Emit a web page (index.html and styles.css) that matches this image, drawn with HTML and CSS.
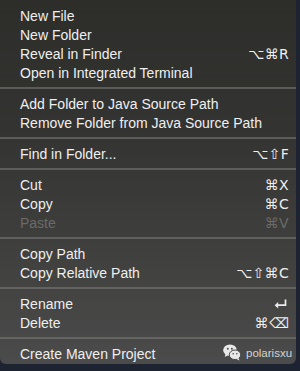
FILE: index.html
```html
<!DOCTYPE html>
<html>
<head>
<meta charset="utf-8">
<link rel="stylesheet" href="styles.css">
</head>
<body>
<div class="menu">
  <div class="group">
    <div class="item"><span class="label">New File</span></div>
    <div class="item"><span class="label">New Folder</span></div>
    <div class="item"><span class="label">Reveal in Finder</span><span class="key">⌥⌘R</span></div>
    <div class="item"><span class="label">Open in Integrated Terminal</span></div>
  </div>
  <div class="sep"></div>
  <div class="group">
    <div class="item"><span class="label">Add Folder to Java Source Path</span></div>
    <div class="item"><span class="label">Remove Folder from Java Source Path</span></div>
  </div>
  <div class="sep"></div>
  <div class="group">
    <div class="item"><span class="label">Find in Folder...</span><span class="key">⌥⇧F</span></div>
  </div>
  <div class="sep"></div>
  <div class="group">
    <div class="item"><span class="label">Cut</span><span class="key">⌘X</span></div>
    <div class="item"><span class="label">Copy</span><span class="key">⌘C</span></div>
    <div class="item disabled"><span class="label">Paste</span><span class="key">⌘V</span></div>
  </div>
  <div class="sep"></div>
  <div class="group">
    <div class="item"><span class="label">Copy Path</span></div>
    <div class="item"><span class="label">Copy Relative Path</span><span class="key">⌥⇧⌘C</span></div>
  </div>
  <div class="sep"></div>
  <div class="group">
    <div class="item"><span class="label">Rename</span><span class="key"><svg class="ret" width="13" height="10" viewBox="0 0 13 10"><path d="M11.5 0.5 V6.2 H2.5" fill="none" stroke="#ececec" stroke-width="1.7"/><path d="M0.6 6.2 L4.2 3 V9.4 Z" fill="#ececec"/></svg></span></div>
    <div class="item"><span class="label">Delete</span><span class="key">⌘⌫</span></div>
  </div>
  <div class="sep"></div>
  <div class="group">
    <div class="item"><span class="label">Create Maven Project</span></div>
  </div>
</div>
<div class="watermark">
  <svg width="18" height="17" viewBox="0 0 18 17">
    <ellipse cx="7" cy="6.2" rx="6.8" ry="5.8" fill="#e8e8e8"/>
    <path d="M2.5 9.8 L1.8 13 L5.2 11 Z" fill="#e8e8e8"/>
    <ellipse cx="12" cy="10.8" rx="5.7" ry="4.8" fill="#e8e8e8" stroke="#4a4a4a" stroke-width="1"/>
    <path d="M15.3 13.8 L16.6 16.6 L13.4 15 Z" fill="#e8e8e8"/>
    <circle cx="4.8" cy="4.7" r="0.95" fill="#4a4a4a"/>
    <circle cx="8.9" cy="4.7" r="0.95" fill="#4a4a4a"/>
    <circle cx="10.2" cy="9.8" r="0.8" fill="#4a4a4a"/>
    <circle cx="13.8" cy="9.8" r="0.8" fill="#4a4a4a"/>
  </svg>
  <span>polarisxu</span>
</div>
</body>
</html>
```
FILE: styles.css
```css
html, body {
  margin: 0;
  padding: 0;
}
body {
  width: 300px;
  height: 371px;
  background: #1d2330;
  position: relative;
  overflow: hidden;
  font-family: "Liberation Sans", Arial, "DejaVu Sans", sans-serif;
}
.menu {
  width: 296px;
  height: 364px;
  box-sizing: border-box;
  padding-top: 6px;
  background: linear-gradient(to bottom, #2d2d2a 0%, #333331 35%, #3e3e3c 65%, #4b4b4b 100%);
  border-bottom-left-radius: 6px;
  border-bottom-right-radius: 6px;
  display: flex;
  flex-direction: column;
}
.group {
  display: flex;
  flex-direction: column;
}
.item {
  height: 19px;
  display: flex;
  align-items: center;
  justify-content: space-between;
  padding: 0 7px 0 20px;
  color: #efefef;
  font-size: 14px;
}
.item.disabled {
  color: #6b6b69;
}
.key {
  font-family: "DejaVu Sans", sans-serif;
  font-size: 14px;
  letter-spacing: 0.3px;
  display: flex;
  align-items: center;
}
.ret {
  margin-right: 2px;
}
.sep {
  height: 12px;
  display: flex;
  align-items: center;
}
.sep::before {
  content: "";
  display: block;
  width: 100%;
  height: 2px;
  background: rgba(120, 120, 118, 0.6);
}
.watermark {
  position: absolute;
  left: 223px;
  top: 344px;
  display: flex;
  align-items: center;
  gap: 5px;
  color: #d4d4d4;
  font-size: 11.5px;
  font-family: "Liberation Sans", Arial, sans-serif;
}
```
